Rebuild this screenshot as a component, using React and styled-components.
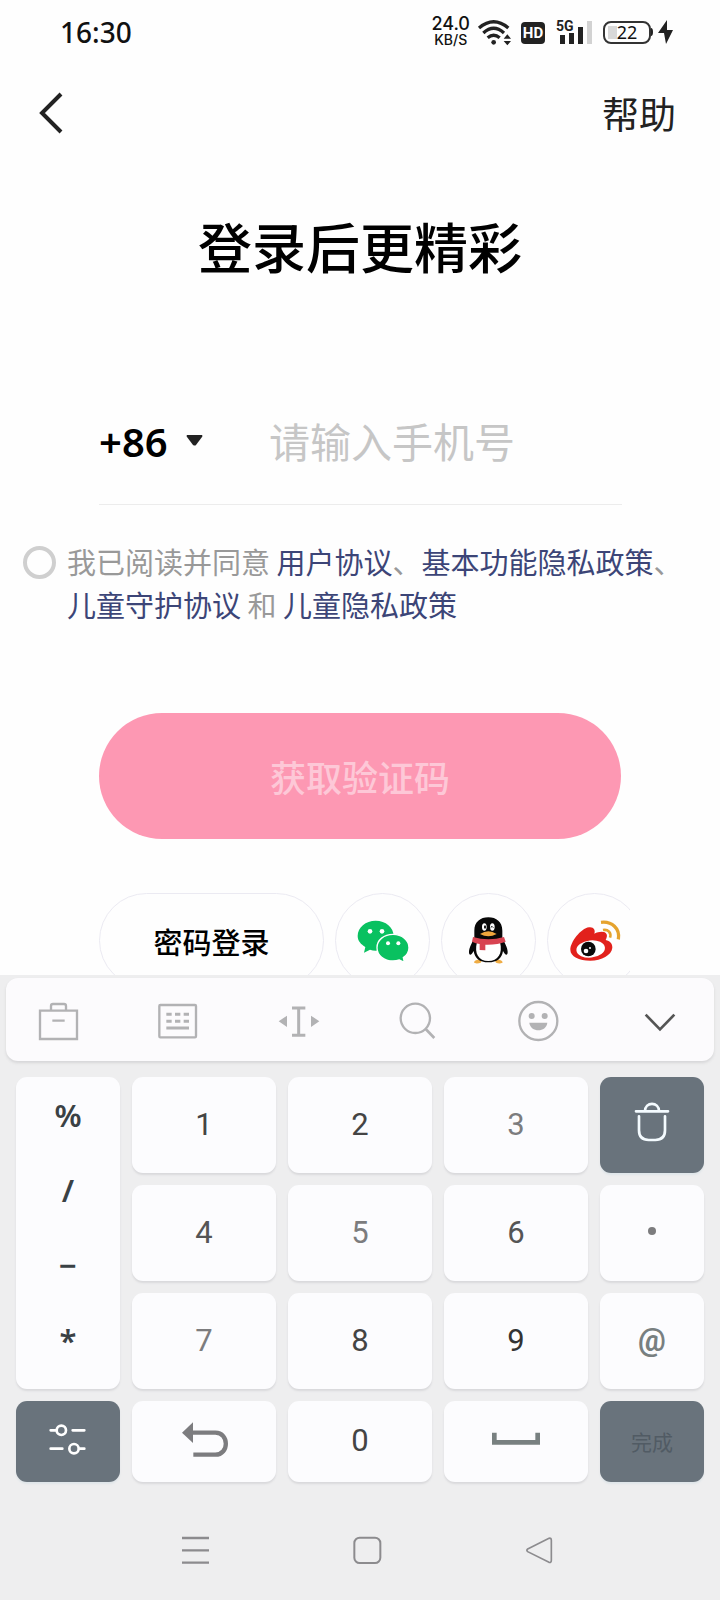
import React, { useState } from 'react';
import styled, { createGlobalStyle } from 'styled-components';

const GlobalStyle = createGlobalStyle`
    * {
        box-sizing: border-box;
    }
    body {
        margin: 0;
        background-color: #fefefe;
        font-family: "Noto Sans", "Noto Sans CJK SC", sans-serif;
    }
    button, input, select {
        font-family: inherit;
        margin: 0;
        padding: 0;
        border: none;
        background: none;
        color: inherit;
    }
    svg {
        display: block;
        overflow: visible;
        flex-shrink: 0;
    }
`;

const Screen = styled.div`
    display: flex;
    flex-direction: column;
    height: 100vh;
`;

const Page = styled.main`
    display: flex;
    flex-direction: column;
    flex: 1;
    min-height: 0;
    overflow: hidden;
    & > * {
        flex-shrink: 0;
    }
`;

const StatusBar = styled.div`
    display: flex;
    align-items: center;
    height: 64px;
    padding: 0 47px 0 60px;
    color: #111;
`;

const Time = styled.span`
    flex: 1;
    font-size: 28px;
    font-weight: 500;
`;

const Speed = styled.span`
    display: flex;
    flex-direction: column;
    align-items: center;
    margin-right: 8px;
    font-size: 18px;
    line-height: 16px;
    font-weight: 500;
    font-family: Inter, sans-serif;
    small {
        font-size: 14px;
        line-height: 16px;
    }
`;

const HdBadge = styled.span`
    width: 24px;
    margin: 2px 12px 0 10px;
    border-radius: 4px;
    background-color: #222;
    color: white;
    font: bold 15px/22px Roboto, sans-serif;
    text-align: center;
`;

const Battery = styled.span`
    width: 48px;
    margin-left: 11px;
    border: 2px solid #333;
    border-radius: 8px;
    background: linear-gradient(#d8d8d8, #d8d8d8) 3px center / 9px 13px no-repeat;
    font-size: 18px;
    line-height: 19px;
    text-align: center;
`;

const Header = styled.header`
    display: flex;
    align-items: center;
    justify-content: space-between;
    height: 98px;
    padding: 0 44px 0 37px;
`;

const IconButton = styled.button`
    display: flex;
    align-items: center;
    justify-content: center;
`;

const Help = styled.a`
    font-size: 37px;
    color: #222;
    text-decoration: none;
`;

const Title = styled.h1`
    margin: 46px 0 0;
    font-size: 54px;
    line-height: 80px;
    font-weight: 500;
    text-align: center;
    color: #000;
`;

const PhoneRow = styled.div`
    display: flex;
    align-items: center;
    height: 126px;
    margin: 91px 98px 0 99px;
    border-bottom: 1px solid #ececec;
`;

const CountryCode = styled.label`
    display: flex;
    align-items: center;
    gap: 18px;
    width: 170px;
    select {
        appearance: none;
        font-size: 40px;
        font-weight: 600;
        color: #000;
    }
`;

const PhoneInput = styled.input`
    flex: 1;
    min-width: 0;
    font-size: 41px;
    outline: none;
    &::placeholder {
        color: #c6c6c6;
    }
`;

const Agreement = styled.div`
    display: flex;
    align-items: flex-start;
    gap: 11px;
    margin: 35px 28px 0 23px;
    font-size: 29px;
    line-height: 43px;
    font-family: "Noto Sans CJK SC", sans-serif;
    color: #999;
    p {
        margin: 0;
    }
    a {
        color: #3c4577;
        text-decoration: none;
    }
`;

const RoundCheck = styled.input`
    appearance: none;
    flex-shrink: 0;
    width: 33px;
    height: 33px;
    margin-top: 6px;
    border: 4px solid #cfcfcf;
    border-radius: 50%;
    &:checked {
        background-color: #fd98b3;
    }
`;

const SubmitButton = styled.button`
    height: 126px;
    margin: 87px 99px 0;
    border-radius: 63px;
    background-color: #fd98b3;
    color: #fdc8d7;
    font-size: 36px;
    font-weight: 500;
`;

const LoginWays = styled.div`
    display: flex;
    gap: 11px;
    margin: 54px 90px 0 99px;
    overflow: hidden;
`;

const LoginWay = styled.button`
    display: flex;
    align-items: center;
    justify-content: center;
    flex-shrink: 0;
    width: ${props => props.$wide ? '225px' : '95px'};
    height: 95px;
    border: 1px solid #ebeaf2;
    border-radius: 48px;
    font-size: 29px;
    font-weight: 500;
    color: #000;
`;

const Keyboard = styled.section`
    padding-top: 3px;
    background-color: #eeeeef;
`;

const Toolbar = styled.div`
    display: flex;
    align-items: center;
    justify-content: space-between;
    height: 83px;
    margin: 0 6px;
    padding: 0 32px;
    border-radius: 12px;
    background-color: #fcfbfd;
    box-shadow: 0 2px 3px #d6d6d8;
`;

const Keys = styled.div`
    display: grid;
    grid-template-columns: 13fr 18fr 18fr 18fr 13fr;
    grid-template-rows: 96px 96px 96px 81px;
    gap: 12px;
    margin: 16px 16px 0;
`;

const Key = styled.button`
    display: flex;
    align-items: center;
    justify-content: center;
    padding-bottom: 2px;
    border-radius: 11px;
    background-color: ${props => props.$dark ? '#69737c' : '#fcfcfe'};
    box-shadow: 0 2px 2px ${props => props.$dark ? '#dfe5e9' : '#d9d9dc'};
    color: ${props => props.$color || '#444'};
    font: ${props => props.$bold ? 'bold' : 'normal'} ${props => props.$size || '31px'} Roboto, "Noto Sans CJK SC", sans-serif;
`;

const Symbols = styled.div`
    display: grid;
    grid-row: span 3;
    grid-template-rows: repeat(4, 75px);
    border-radius: 11px;
    background-color: #fcfcfe;
    box-shadow: 0 2px 2px #d9d9dc;
    button {
        font: 600 31px "Noto Sans", sans-serif;
        color: #3a4145;
    }
`;

const NavBar = styled.nav`
    display: grid;
    grid-template-columns: repeat(3, 1fr);
    height: 118px;
    padding: 18px 94px 0 110px;
`;

const Icon = ({box, size = 48, children}) => (
    <svg width={size} height={size} viewBox={`${box} ${size * 3} ${size * 3}`} fill="none" aria-hidden="true">
        {children}
    </svg>
);

const WifiIcon = () => (
    <svg width="33" height="27" viewBox="234 52 99 81" fill="none" stroke="#222" strokeWidth="10">
        <path d="M237 79Q281 42 325 79M250 94Q281 66 312 94M263 108Q281 93 299 108" />
        <circle cx="281" cy="122" r="7" fill="#222" stroke="none" />
        <path d="M322 98l11 13h-22zM322 131l11-13h-22z" fill="#222" stroke="none" />
    </svg>
);

const SignalIcon = () => (
    <svg width="35" height="27" viewBox="0 0 35 27" fill="#222">
        <text x="-1" y="12" fontSize="14" fontWeight="bold" fontFamily="Roboto, sans-serif">5G</text>
        <path d="M3 16h5v9H3zM12 14h5v11h-5zM21 8h5v17h-5z" />
        <path d="M30 2h5v23h-5z" fill="#d2d2d2" />
    </svg>
);

const WechatIcon = () => (
    <Icon box="98 91" size={60}>
        <path d="M166 120c30 0 54 20 54 46s-24 44-54 44c-6 0-12-1-17-3l-18 9 4-17c-13-8-23-18-23-33 0-26 24-46 54-46z" fill="#09c160" />
        <path d="M218 161c27 0 48 17 48 40 0 13-7 23-17 30l3 14-15-7c-6 2-12 3-19 3-27 0-48-17-48-40s21-40 48-40z" fill="#09c160" stroke="#fff" strokeWidth="4" />
        <g fill="#fff">
            <circle cx="149" cy="152" r="7" />
            <circle cx="185" cy="152" r="7" />
            <circle cx="203" cy="188" r="6" />
            <circle cx="234" cy="188" r="6" />
        </g>
    </Icon>
);

const QqIcon = () => (
    <Icon box="416 91" size={60}>
        <path d="M461 245c2-8 12-10 24-6l-4 7c-7 3-19 3-20-1zM547 245c-2-8-12-10-24-6l4 7c7 3 19 3 20-1z" fill="#efad45" />
        <path d="M462 172v-22c0-26 18-40 42-40s42 14 42 40v22c7 14 16 30 16 42 0 11-7 11-14-3-3 22-18 34-44 34s-41-12-44-34c-7 14-14 14-14 3 0-12 9-28 16-42z" fill="#080808" />
        <path d="M470 184c9 5 60 5 69 0 9 35-6 57-35 57s-43-22-34-57z" fill="#fff" />
        <ellipse cx="492" cy="139" rx="7" ry="11" fill="#fff" />
        <ellipse cx="516" cy="139" rx="7" ry="11" fill="#fff" />
        <ellipse cx="494" cy="139" rx="3" ry="5" fill="#080808" />
        <path d="M511 141q4-8 8 0" stroke="#080808" strokeWidth="3" />
        <path d="M479 160q25-16 50 0-25 14-50 0z" fill="#f0a63c" />
        <path d="M458 169q46 14 93 0l5 14q-25 10-61 9v17l-17-1v-18q-12-2-23-7z" fill="#d84351" />
    </Icon>
);

const WeiboIcon = () => (
    <Icon box="734 91" size={60}>
        <path d="M750 207c0-22 31-64 56-67 14-2 20 8 16 19 14-7 33-9 37 2 2 6 0 11-3 17 13 3 21 11 20 23-2 22-32 39-66 39s-60-13-60-33z" fill="#e2211c" />
        <ellipse cx="811" cy="205" rx="43" ry="26" transform="rotate(-6 811 205)" fill="#fff" />
        <circle cx="804" cy="205" r="22" fill="#0a0a0a" />
        <circle cx="797" cy="211" r="7" fill="#fff" />
        <circle cx="809" cy="202" r="3" fill="#fff" />
        <path d="M842 125c32-4 58 18 52 51" stroke="#e5a32e" strokeWidth="10" />
        <path d="M848 148c15-3 26 8 21 23" stroke="#e5a32e" strokeWidth="8" />
    </Icon>
);

// панель над клавишами
const tools = [
    {name: '工具箱', box: '114 87', icon: <path d="M120 122h111v85H120zM153 122v-14q0-6 6-6h33q6 0 6 6v14M157 152h37" stroke="#b2b2b4" strokeWidth="7" />},
    {name: '键盘', box: '475 87', icon: <>
        <rect x="479" y="105" width="110" height="97" rx="3" stroke="#b2b2b4" strokeWidth="7" />
        <path d="M500 133h16M526 133h16M552 133h16M500 154h16M526 154h16M552 154h16M500 174h68" stroke="#b2b2b4" strokeWidth="9" />
    </>},
    {name: '光标', box: '836 87', icon: <>
        <path d="M875 114h40M875 196h40M895 114v82" stroke="#b2b2b4" strokeWidth="9" />
        <path d="M835 154l25-17v34zM957 154l-25-17v34z" fill="#b2b2b4" />
    </>},
    {name: '搜索', box: '118 87', icon: <>
        <circle cx="167" cy="145" r="44" stroke="#b2b2b4" strokeWidth="7" />
        <path d="M198 177l26 27" stroke="#b2b2b4" strokeWidth="8" />
    </>},
    {name: '表情', box: '479 87', icon: <>
        <circle cx="534" cy="153" r="57" stroke="#b2b2b4" strokeWidth="7" />
        <circle cx="514" cy="138" r="9" fill="#b2b2b4" />
        <circle cx="553" cy="138" r="9" fill="#b2b2b4" />
        <path d="M507 158h54c-3 30-51 30-54 0z" fill="#b2b2b4" />
    </>},
    {name: '收起', box: '840 87', icon: <path d="M857 134l43 44 43-44" stroke="#555" strokeWidth="8" />},
];

const App = () => {
    const [phone, setPhone] = useState('');
    const [agreed, setAgreed] = useState(false);

    function addSymbol(symbol) {
        setPhone(phone + symbol);
    };

    // обычная клавиша с символом
    const renderKey = (symbol, color) => (
        <Key type="button" $color={color} onClick={() => addSymbol(symbol)}>{symbol}</Key>
    );

    return (
        <Screen>
            <GlobalStyle />
            <Page>
                <StatusBar>
                    <Time>16:30</Time>
                    <Speed>24.0<small>KB/S</small></Speed>
                    <WifiIcon />
                    <HdBadge>HD</HdBadge>
                    <SignalIcon />
                    <Battery>22</Battery>
                    <svg width="22" height="24" viewBox="0 0 22 24" fill="#222">
                        <path d="M0 8q2 0 2 4t-2 4zM16 0L7 13h6l2 11 7-14h-6z" />
                    </svg>
                </StatusBar>
                <Header>
                    <IconButton type="button" aria-label="返回">
                        <svg width="26" height="44" viewBox="0 0 26 44" fill="none" stroke="#222" strokeWidth="4">
                            <path d="M24 3L5 22l19 19" />
                        </svg>
                    </IconButton>
                    <Help href="#help">帮助</Help>
                </Header>
                <Title>登录后更精彩</Title>
                <PhoneRow>
                    <CountryCode>
                        <select aria-label="国家代码">
                            <option>+86</option>
                        </select>
                        <svg width="17" height="16" viewBox="0 0 17 16" fill="#222">
                            <path d="M1 1h15q1 1 0 2l-6 8q-1 1-3 0L1 3q-1-1 0-2z" />
                        </svg>
                    </CountryCode>
                    <PhoneInput type="tel" aria-label="手机号" placeholder="请输入手机号" value={phone} onChange={e => setPhone(e.target.value)} />
                </PhoneRow>
                <Agreement>
                    <RoundCheck type="checkbox" id="agree" checked={agreed} onChange={e => setAgreed(e.target.checked)} />
                    <p>
                        <label htmlFor="agree">我已阅读并同意</label> <a href="#user">用户协议</a>、<a href="#privacy">基本功能隐私政策</a>、<a href="#guard">儿童守护协议</a> 和 <a href="#child">儿童隐私政策</a>
                    </p>
                </Agreement>
                <SubmitButton type="button">获取验证码</SubmitButton>
                <LoginWays>
                    <LoginWay type="button" $wide>密码登录</LoginWay>
                    <LoginWay type="button" aria-label="微信"><WechatIcon /></LoginWay>
                    <LoginWay type="button" aria-label="QQ"><QqIcon /></LoginWay>
                    <LoginWay type="button" aria-label="微博"><WeiboIcon /></LoginWay>
                </LoginWays>
            </Page>
            <Keyboard>
                <Toolbar>
                    { tools.map(e => (
                        <IconButton type="button" key={e.name} aria-label={e.name}>
                            <Icon box={e.box} size={42}>{e.icon}</Icon>
                        </IconButton>
                    )) }
                </Toolbar>
                <Keys>
                    <Symbols>
                        { ['%', '/', '−', '*'].map(e => <button type="button" key={e} onClick={() => addSymbol(e)}>{e}</button>) }
                    </Symbols>
                    {renderKey('1')}
                    {renderKey('2')}
                    {renderKey('3', '#7c7c7e')}
                    <Key type="button" $dark aria-label="删除" onClick={() => setPhone(phone.slice(0, -1))}>
                        <Icon box="804 396">
                            <path d="M828 430h96M855 430c0-30 42-30 42 0M837 445v42q0 29 29 29h20q29 0 29-29v-42" stroke="#f4fbff" strokeWidth="8" strokeLinecap="round" />
                        </Icon>
                    </Key>
                    {renderKey('4', '#555')}
                    {renderKey('5', '#7c7c7e')}
                    {renderKey('6', '#555')}
                    <Key type="button" $color="#7c7c7e" aria-label="点" onClick={() => addSymbol('.')}>
                        <Icon box="804 396">
                            <circle cx="876" cy="465" r="12" fill="#7c7c7e" />
                        </Icon>
                    </Key>
                    {renderKey('7', '#7c7c7e')}
                    {renderKey('8')}
                    {renderKey('9', '#333')}
                    <Key type="button" $color="#787f80" $bold onClick={() => addSymbol('@')}>@</Key>
                    <Key type="button" $dark aria-label="设置">
                        <Icon box="132 655">
                            <g stroke="#fff" strokeWidth="8" strokeLinecap="round">
                                <path d="M152 695h16M218 695h35M152 750h35M238 750h15" />
                                <circle cx="184" cy="695" r="14" />
                                <circle cx="222" cy="750" r="14" />
                            </g>
                        </Icon>
                    </Key>
                    <Key type="button" aria-label="返回">
                        <Icon box="540 655">
                            <path d="M572 702h74c42 0 42 66 0 66h-66" stroke="#7c7c7f" strokeWidth="13" />
                            <path d="M546 702l33-31v62z" fill="#7c7c7f" />
                        </Icon>
                    </Key>
                    {renderKey('0')}
                    <Key type="button" aria-label="空格">
                        <Icon box="396 655">
                            <path d="M403 702v29h130v-29" stroke="#788080" strokeWidth="14" />
                        </Icon>
                    </Key>
                    <Key type="button" $dark $size="21px" $color="#515b64">完成</Key>
                </Keys>
                <NavBar>
                    <IconButton type="button" aria-label="最近任务">
                        <Icon box="516 978">
                            <path d="M546 1014h81M546 1051h81M546 1088h81" stroke="#8c8b8e" strokeWidth="7" />
                        </Icon>
                    </IconButton>
                    <IconButton type="button" aria-label="主页">
                        <Icon box="1032 978">
                            <rect x="1063" y="1013" width="78" height="76" rx="16" stroke="#8c8b8e" strokeWidth="6" />
                        </Icon>
                    </IconButton>
                    <IconButton type="button" aria-label="后退">
                        <Icon box="468 978">
                            <path d="M503 1047l64-32q7-2 7 6v60q0 8-7 6l-64-32q-5-4 0-8z" stroke="#8c8b8e" strokeWidth="5" />
                        </Icon>
                    </IconButton>
                </NavBar>
            </Keyboard>
        </Screen>
    );
};

export default App;
